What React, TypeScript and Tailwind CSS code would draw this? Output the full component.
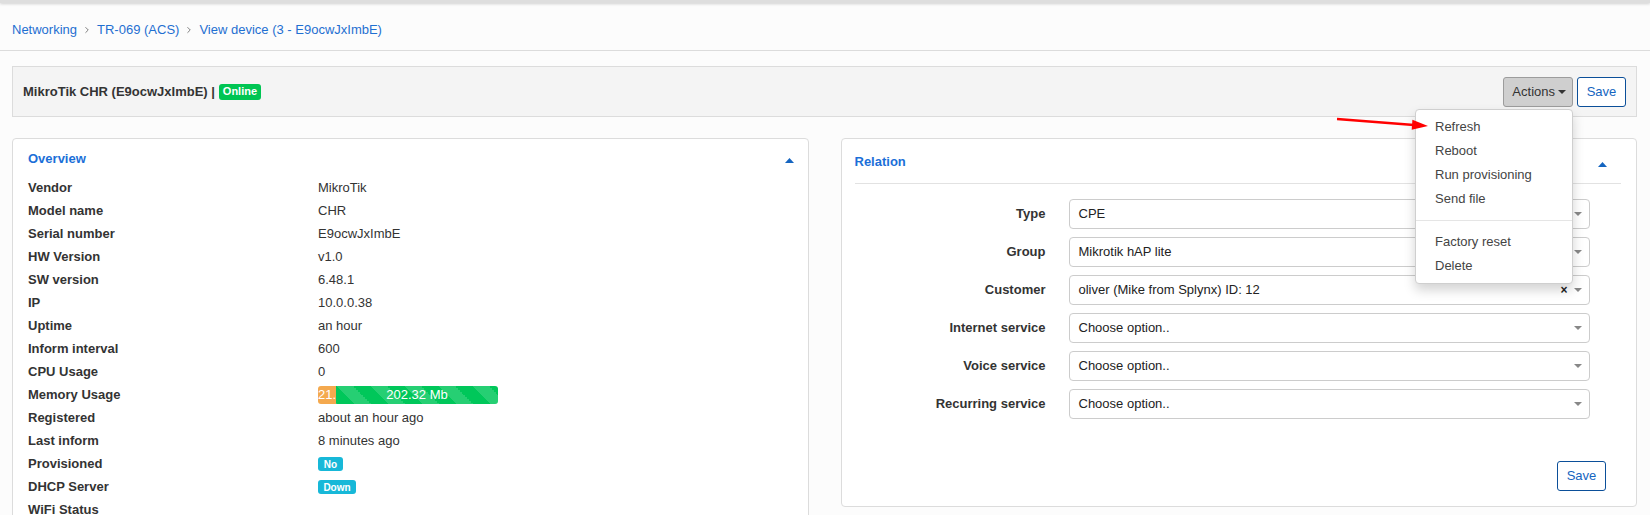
import React from 'react';
import { ChevronRight } from 'lucide-react';

const font = { fontFamily: '"Liberation Sans", Arial, sans-serif' };

const CaretUp = () => (
    <svg width="9" height="5" viewBox="0 0 9 5"><polygon points="0,5 9,5 4.5,0" fill="#1565c0" /></svg>
);

const CaretDown = ({ color }: { color: string }) => (
    <svg width="8" height="4" viewBox="0 0 8 4"><polygon points="0,0 8,0 4,4" fill={color} /></svg>
);

const Badge = ({ text, className }: { text: string; className: string }) => (
    <span className={`inline-flex items-center justify-center rounded-[3px] text-white font-bold ${className}`}>{text}</span>
);

const MemoryBar = () => (
    <div className="flex w-[180px] h-[18px] rounded-[3px] overflow-hidden text-white text-[13px] leading-[18px]">
        <div className="w-[18px] bg-[#f4a94e] overflow-hidden whitespace-nowrap">21.</div>
        <div className="flex-1 text-center bg-[#00c75a] bg-[linear-gradient(45deg,rgba(255,255,255,.15)_25%,transparent_25%,transparent_50%,rgba(255,255,255,.15)_50%,rgba(255,255,255,.15)_75%,transparent_75%,transparent)] [background-size:34px_34px]">
            202.32 Mb
        </div>
    </div>
);

const overview: { label: string; value: React.ReactNode }[] = [
    { label: 'Vendor', value: 'MikroTik' },
    { label: 'Model name', value: 'CHR' },
    { label: 'Serial number', value: 'E9ocwJxImbE' },
    { label: 'HW Version', value: 'v1.0' },
    { label: 'SW version', value: '6.48.1' },
    { label: 'IP', value: '10.0.0.38' },
    { label: 'Uptime', value: 'an hour' },
    { label: 'Inform interval', value: '600' },
    { label: 'CPU Usage', value: '0' },
    { label: 'Memory Usage', value: <MemoryBar /> },
    { label: 'Registered', value: 'about an hour ago' },
    { label: 'Last inform', value: '8 minutes ago' },
    { label: 'Provisioned', value: <Badge text="No" className="w-[25px] h-[14px] text-[10px] bg-[#17b8d8]" /> },
    { label: 'DHCP Server', value: <Badge text="Down" className="w-[38px] h-[14px] text-[10px] bg-[#17b8d8]" /> },
    { label: 'WiFi Status', value: '' },
];

const relation = [
    { label: 'Type', value: 'CPE' },
    { label: 'Group', value: 'Mikrotik hAP lite' },
    { label: 'Customer', value: 'oliver (Mike from Splynx) ID: 12', clear: true },
    { label: 'Internet service', value: 'Choose option..' },
    { label: 'Voice service', value: 'Choose option..' },
    { label: 'Recurring service', value: 'Choose option..' },
];

const menu = ['Refresh', 'Reboot', 'Run provisioning', 'Send file'];

export default function App() {
    return (
        <div className="relative h-[515px] overflow-hidden bg-[#fcfcfc] text-[13px] text-[#333]" style={font}>
            <div className="h-[3px] bg-[#dedede] shadow-[0_1px_3px_rgba(0,0,0,0.18)]" />

            {/* breadcrumb */}
            <div className="flex items-center px-3 pt-[17px] pb-[10px] leading-[20px] border-b border-[#dcdcdc] text-[#1f6fd1]">
                <span>Networking</span>
                <ChevronRight size={10} strokeWidth={2} className="mx-[5px] text-[#666]" />
                <span>TR-069 (ACS)</span>
                <ChevronRight size={10} strokeWidth={2} className="mx-[5px] text-[#666]" />
                <span>View device (3 - E9ocwJxImbE)</span>
            </div>

            <div className="pl-3 pr-[13px] pt-[15px]">
                {/* title bar */}
                <div className="flex items-center justify-between h-[51px] bg-[#f4f4f4] border border-[#dcdcdc] pl-[10px] pr-[10px]">
                    <div className="flex items-center gap-[4px] font-bold">
                        <span>MikroTik CHR (E9ocwJxImbE) |</span>
                        <Badge text="Online" className="w-[42px] h-[16px] text-[11px] bg-[#00c553]" />
                    </div>
                    <div className="flex items-center gap-[4px]">
                        <div className="relative">
                            <button className="flex items-center gap-[3px] h-[30px] pl-[8px] pr-[6px] rounded-[3px] bg-[#cfcfcf] border border-[#9c9c9c] text-[#333]">
                                Actions <CaretDown color="#333" />
                            </button>
                            <div className="absolute right-0 top-[32px] z-10 w-[158px] bg-white border border-[#cfcfcf] rounded-[4px] shadow-[0_6px_12px_rgba(0,0,0,0.175)] py-[5px]">
                                {menu.map((m) => (
                                    <div key={m} className="h-[24px] leading-[24px] px-[19px] text-[#444]">{m}</div>
                                ))}
                                <div className="my-[9px] h-px bg-[#e5e5e5]" />
                                {['Factory reset', 'Delete'].map((m) => (
                                    <div key={m} className="h-[24px] leading-[24px] px-[19px] text-[#444]">{m}</div>
                                ))}
                            </div>
                        </div>
                        <button className="h-[30px] w-[49px] rounded-[3px] bg-white border border-[#0b4f99] text-[#1565c0]">Save</button>
                    </div>
                </div>

                {/* cards */}
                <div className="grid grid-cols-2 gap-[32px] mt-[21px] items-start">
                    <div className="bg-white border border-[#dcdcdc] rounded-[4px] pl-[15px] pr-[14px] pt-[11px] pb-[40px]">
                        <div className="flex items-center justify-between leading-[18px]">
                            <span className="font-bold text-[#1b6fd8]">Overview</span>
                            <span className="pt-[2px]"><CaretUp /></span>
                        </div>
                        <div className="mt-[8px]">
                            {overview.map((r) => (
                                <div key={r.label} className="flex items-center h-[23px]">
                                    <div className="w-[290px] font-bold">{r.label}</div>
                                    <div>{r.value}</div>
                                </div>
                            ))}
                        </div>
                    </div>

                    <div className="bg-white border border-[#dcdcdc] rounded-[4px] pl-[13px] pr-[15px] pt-[14px] pb-[15px]">
                        <div className="flex items-center justify-between leading-[18px]">
                            <span className="font-bold text-[#1b6fd8]">Relation</span>
                            <span className="pt-[5px] mr-[14px]"><CaretUp /></span>
                        </div>
                        <div className="mt-[12px] h-px bg-[#e2e2e2]" />
                        <div className="mt-[15px] flex flex-col gap-[8px]">
                            {relation.map((r) => (
                                <div key={r.label} className="flex items-center gap-[23px]">
                                    <div className="w-[191px] text-right font-bold">{r.label}</div>
                                    <div className="flex items-center w-[521px] h-[30px] bg-white border border-[#cccccc] rounded-[4px] pl-[9px] pr-[7px]">
                                        <span className="flex-1 text-[#222]">{r.value}</span>
                                        {r.clear && <span className="mr-[6px] text-[12px] font-bold text-[#222] leading-none">×</span>}
                                        <CaretDown color="#888" />
                                    </div>
                                </div>
                            ))}
                        </div>
                        <div className="flex justify-end mt-[42px] mr-[15px]">
                            <button className="h-[30px] w-[49px] rounded-[3px] bg-white border border-[#0b4f99] text-[#1565c0]">Save</button>
                        </div>
                    </div>
                </div>
            </div>

            {/* annotation arrow */}
            <svg className="absolute left-[1330px] top-[110px] z-20" width="105" height="25" viewBox="0 0 105 25">
                <line x1="7" y1="9" x2="84" y2="15" stroke="#ff0000" strokeWidth="2.5" />
                <polygon points="98,16 82.4,9.8 81.7,19.8" fill="#ff0000" />
            </svg>
        </div>
    );
}
